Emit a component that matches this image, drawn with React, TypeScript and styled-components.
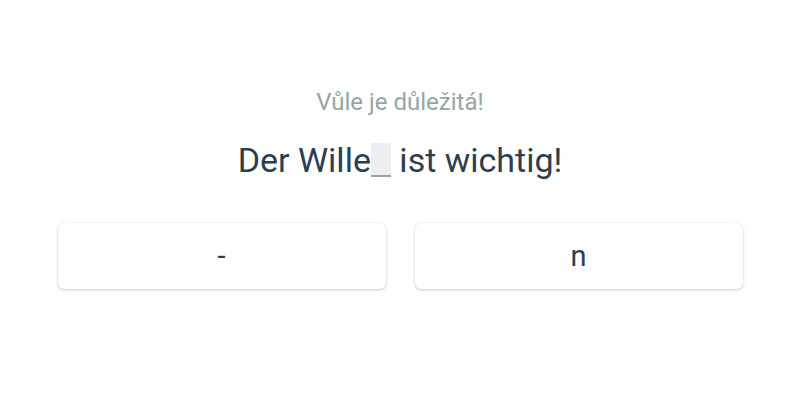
import React from 'react';
import styled, { createGlobalStyle } from 'styled-components';

const GlobalStyle = createGlobalStyle`
  html, body {
    margin: 0;
    padding: 0;
    background: #ffffff;
    font-family: Roboto, "Noto Sans", sans-serif;
  }
`;

const StyledExercise = styled.div`
  display: flex;
  flex-direction: column;
  align-items: center;
  width: 800px;
  height: 400px;
  padding-top: 88px;
  box-sizing: border-box;
`;

const Hint = styled.p`
  margin: 0;
  font-size: 24px;
  line-height: 28px;
  color: #95a5a6;
`;

const Sentence = styled.h1`
  margin: 22px 0 0;
  font-weight: 400;
  font-size: 34px;
  line-height: 44px;
  color: #2c3e50;
`;

const Blank = styled.span`
  display: inline-block;
  width: 20px;
  height: 34px;
  vertical-align: -5px;
  background: #eceff1;
  border-bottom: 2px solid #95a5a6;
  box-sizing: border-box;
`;

const Options = styled.div`
  display: grid;
  grid-template-columns: 328px 328px;
  gap: 29px;
  margin-top: 41px;
`;

const Option = styled.button`
  height: 66px;
  border: none;
  border-radius: 6px;
  background: #ffffff;
  box-shadow: 0 1px 3px rgba(0, 0, 0, 0.2), 0 0 1px rgba(0, 0, 0, 0.15);
  font-family: Roboto, "Noto Sans", sans-serif;
  font-size: 29px;
  color: #2c3e50;
  cursor: pointer;
`;

const options = ['-', 'n'];

const App = () => {
  return (
    <>
      <GlobalStyle />
      <StyledExercise>
        <Hint>Vůle je důležitá!</Hint>
        <Sentence>
          Der Wille<Blank /> ist wichtig!
        </Sentence>
        <Options>
          {options.map((option) => (
            <Option key={option}>{option}</Option>
          ))}
        </Options>
      </StyledExercise>
    </>
  );
};

export default App;
